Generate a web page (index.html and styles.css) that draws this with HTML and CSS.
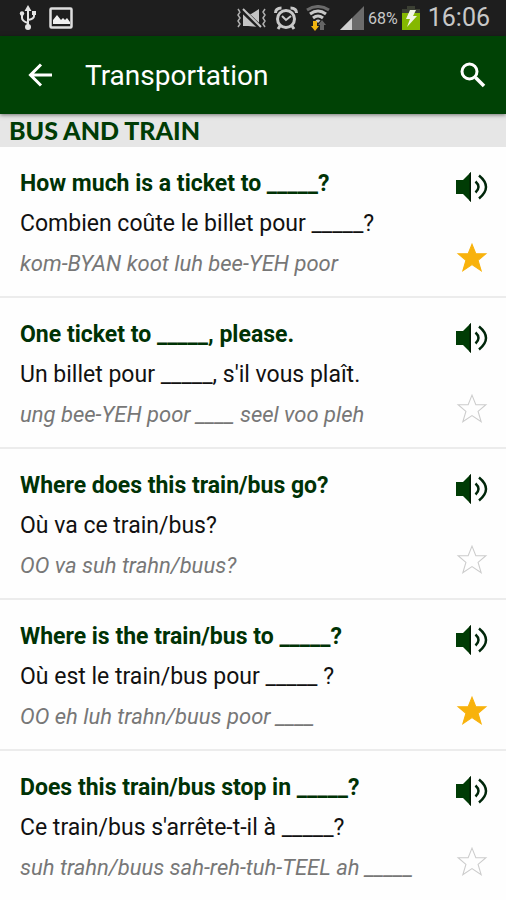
FILE: index.html
```html
<!DOCTYPE html>
<html lang="en">
<head>
  <meta charset="UTF-8" />
  <meta name="viewport" content="width=device-width, initial-scale=1" />
  <title>Transportation</title>
  <link rel="stylesheet" href="styles.css">
</head>
<body>
  <!-- Shared icons -->
  <svg class="sprite" aria-hidden="true">
    <symbol id="speaker" viewBox="0 0 32 32">
      <path d="M0 9h7l8-8v30l-8-8H0z" fill="#003c05" />
      <path d="M13.500 2.500L15 1v30l-1.500-1.500z" fill="#001a02" />
      <path d="M19.500 10.500q6 5.500 0 11M23 4.500q14 11.500 0 23" fill="none" stroke="#00260a" stroke-width="2.500" />
    </symbol>
    <symbol id="star" viewBox="0 0 30 30">
      <path d="M15 2l3.600 9H28l-7.300 6.200L23.600 27 15 21.200 6.400 27l2.900-9.800L2 11h9.400z" />
    </symbol>
  </svg>

  <div class="status-bar">
    <div class="status-group">
      <svg class="usb" width="18" height="26" viewBox="0 0 18 26" fill="none" stroke="#e4e4e4" stroke-width="2">
        <path d="M9 4v18M3 9v4q0 3 6 5M15 8v3q0 3-6 4" />
        <path d="M9 0l3.500 6h-7zM13 6h4v4h-4z" fill="#e4e4e4" stroke="none" />
        <circle cx="3" cy="8.500" r="2.200" fill="#e4e4e4" stroke="none" />
        <circle cx="9" cy="22" r="3" fill="#e4e4e4" stroke="none" />
      </svg>
      <svg width="24" height="22" viewBox="0 0 24 22">
        <rect x="1.500" y="1.500" width="21" height="19" rx="1" fill="none" stroke="#dedede" stroke-width="2.500" />
        <path d="M4 17v-4l4-5 4 5 2-2 2 2 2-2 3 4v2z" fill="#f0f0f0" />
      </svg>
    </div>
    <div class="status-group status-right">
      <svg width="29" height="22" viewBox="0 0 29 22">
        <path d="M1 2l2 3-2 3 2 3-2 3 2 3-2 3M28 2l-2 3 2 3-2 3 2 3-2 3 2 3" fill="none" stroke="#b0b0b0" stroke-width="1.500" />
        <path d="M6 6v13h5l11 1V2l-8 5z" fill="#c4c4c4" />
        <path d="M5 3l18 17" stroke="#1e1e1e" stroke-width="5" />
        <path d="M6 2l18 18" stroke="#c4c4c4" stroke-width="2" />
      </svg>
      <svg width="24" height="24" viewBox="0 0 24 24" fill="none" stroke="#c8c8c8">
        <circle cx="12" cy="13" r="8.500" stroke-width="3" />
        <path d="M8 10l4 4 5-4" stroke-width="2" />
        <path d="M1.500 7q0-5 6-5M22.500 7q0-5-6-5" stroke-width="3" />
        <path d="M6 20l-2 3M18 20l2 3" stroke-width="3" />
      </svg>
      <svg class="wifi" width="24" height="26" viewBox="0 0 24 26" fill="none" stroke-width="3">
        <path d="M1 5q11-7 22 0" stroke="#6b6b6b" />
        <path d="M4 9q8-6 16 0M7 13q5-4 10 0" stroke="#c8c8c8" />
        <path d="M9.500 15.500q2.500-2 5 0L12 18z" fill="#c8c8c8" />
        <path d="M7 16h4v5h2l-4 5-4-5h2z" fill="#f0b410" />
        <path d="M14 25h4v-5h2l-4-5-4 5h2z" fill="#666" />
      </svg>
      <svg class="signal" width="24" height="24" viewBox="0 0 24 24">
        <path d="M24 0v24H0z" fill="#6b6b6b" />
        <path d="M12 12v12H0z" fill="#d0d0d0" />
      </svg>
      <span class="battery-level">68%</span>
      <svg width="18" height="24" viewBox="0 0 18 24">
        <path d="M0 3h5V0h8v3h5v21H0z" fill="#3c4034" />
        <path d="M0 7h18v17H0z" fill="#85b800" />
        <path d="M8 4h6l-3 6h4L5 21l3-8H4z" fill="#f2f5e4" />
      </svg>
      <span class="clock">16:06</span>
    </div>
  </div>

  <header class="app-bar">
    <button class="icon-btn" type="button" aria-label="Back">
      <svg width="24" height="24" viewBox="0 0 24 24" fill="none" stroke="#fff" stroke-width="3">
        <path d="M24 12H3M13 1.500L2.500 12 13 22.500" />
      </svg>
    </button>
    <h1 class="title">Transportation</h1>
    <button class="icon-btn" type="button" aria-label="Search">
      <svg width="26" height="26" viewBox="0 0 26 26" fill="none" stroke="#fff">
        <circle cx="9.500" cy="9.500" r="7.500" stroke-width="3" />
        <path d="M15.500 15.500l8.500 8.500" stroke-width="3.500" />
      </svg>
    </button>
  </header>

  <main>
    <h2 class="section-title">BUS AND TRAIN</h2>
    <ul class="phrases">
      <li class="phrase">
        <div class="phrase-text">
          <p class="english">How much is a ticket to _____?</p>
          <p class="french" lang="fr">Combien coûte le billet pour _____?</p>
          <p class="sound">kom-BYAN koot luh bee-YEH poor</p>
        </div>
        <div class="actions">
          <button class="icon-btn" type="button" aria-label="Listen"><svg class="speaker"><use href="#speaker" /></svg></button>
          <button class="icon-btn" type="button" aria-label="Favorite" aria-pressed="true"><svg class="star star-on"><use href="#star" /></svg></button>
        </div>
      </li>
      <li class="phrase">
        <div class="phrase-text">
          <p class="english">One ticket to _____, please.</p>
          <p class="french" lang="fr">Un billet pour _____, s'il vous plaît.</p>
          <p class="sound">ung bee-YEH poor ____ seel voo pleh</p>
        </div>
        <div class="actions">
          <button class="icon-btn" type="button" aria-label="Listen"><svg class="speaker"><use href="#speaker" /></svg></button>
          <button class="icon-btn" type="button" aria-label="Favorite" aria-pressed="false"><svg class="star"><use href="#star" /></svg></button>
        </div>
      </li>
      <li class="phrase">
        <div class="phrase-text">
          <p class="english">Where does this train/bus go?</p>
          <p class="french" lang="fr">Où va ce train/bus?</p>
          <p class="sound">OO va suh trahn/buus?</p>
        </div>
        <div class="actions">
          <button class="icon-btn" type="button" aria-label="Listen"><svg class="speaker"><use href="#speaker" /></svg></button>
          <button class="icon-btn" type="button" aria-label="Favorite" aria-pressed="false"><svg class="star"><use href="#star" /></svg></button>
        </div>
      </li>
      <li class="phrase">
        <div class="phrase-text">
          <p class="english">Where is the train/bus to _____?</p>
          <p class="french" lang="fr">Où est le train/bus pour _____ ?</p>
          <p class="sound">OO eh luh trahn/buus poor ____</p>
        </div>
        <div class="actions">
          <button class="icon-btn" type="button" aria-label="Listen"><svg class="speaker"><use href="#speaker" /></svg></button>
          <button class="icon-btn" type="button" aria-label="Favorite" aria-pressed="true"><svg class="star star-on"><use href="#star" /></svg></button>
        </div>
      </li>
      <li class="phrase">
        <div class="phrase-text">
          <p class="english">Does this train/bus stop in _____?</p>
          <p class="french" lang="fr">Ce train/bus s'arrête-t-il à _____?</p>
          <p class="sound">suh trahn/buus sah-reh-tuh-TEEL ah _____</p>
        </div>
        <div class="actions">
          <button class="icon-btn" type="button" aria-label="Listen"><svg class="speaker"><use href="#speaker" /></svg></button>
          <button class="icon-btn" type="button" aria-label="Favorite" aria-pressed="false"><svg class="star"><use href="#star" /></svg></button>
        </div>
      </li>
    </ul>
  </main>
</body>
</html>
```
FILE: styles.css
```css
* {
  box-sizing: border-box;
}

body {
  margin: 0;
  background-color: #fefefe;
  font-family: Roboto, "Liberation Sans", sans-serif;
}

h1, h2, p, ul {
  margin: 0;
  padding: 0;
}

svg {
  display: block;
  flex-shrink: 0;
}

.sprite {
  display: none;
}

/* Phone status bar */
.status-bar {
  display: flex;
  justify-content: space-between;
  align-items: center;
  height: 36px;
  padding: 0 16px 0 19px;
  background-color: #1e1e1e;
  color: #c8c8c8;
}

.status-group {
  display: flex;
  align-items: center;
  gap: 12px;
}

.status-right {
  gap: 8px;
}

.wifi {
  margin-right: 2px;
}

.battery-level {
  margin: 0 -4px;
  font-size: 16px;
}

.clock {
  font-size: 25px;
  line-height: 36px;
}

/* Green title bar */
.app-bar {
  position: relative;
  display: flex;
  align-items: center;
  height: 78px;
  padding: 0 20px 0 28px;
  background-color: #004205;
  box-shadow: 0 1px 4px rgba(0, 0, 0, 0.5);
}

.icon-btn {
  padding: 0;
  border: 0;
  background: none;
  cursor: pointer;
}

.title {
  flex: 1;
  margin-left: 33px;
  font-size: 28px;
  font-weight: 400;
  color: #fff;
}

.section-title {
  padding-left: 9px;
  background-color: #e6e6e6;
  font-family: Lato, sans-serif;
  font-size: 25px;
  font-weight: 900;
  line-height: 33px;
  color: #003c05;
}

/* Phrase list */
.phrases {
  list-style: none;
}

.phrase {
  display: flex;
  justify-content: space-between;
  padding: 17px 18px 12px 20px;
  border-bottom: 2px solid #ececec;
}

.phrase:last-child {
  border-bottom: 0;
}

.phrase-text {
  font-size: 23px;
  line-height: 40px;
}

.english {
  font-weight: 700;
  color: #003205;
}

.french {
  color: #111;
}

.sound {
  font-size: 22px;
  font-style: italic;
  color: #777;
}

.actions {
  display: flex;
  flex-direction: column;
  justify-content: space-between;
  padding: 7px 0 10px;
}

.speaker {
  width: 32px;
  height: 32px;
}

.star {
  width: 32px;
  height: 32px;
  fill: none;
  stroke: #ccc;
}

.star-on {
  fill: #f8b20c;
  stroke: #f8b20c;
}
```
